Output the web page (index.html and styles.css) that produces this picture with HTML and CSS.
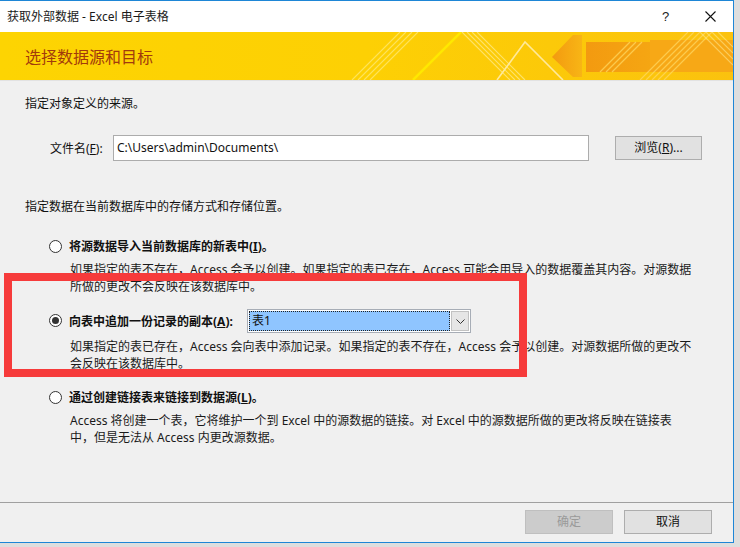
FILE: index.html
```html
<!DOCTYPE html>
<html lang="zh-CN">
<head>
<meta charset="utf-8">
<title>获取外部数据 - Excel 电子表格</title>
<link rel="stylesheet" href="styles.css">
</head>
<body>
<div class="window">
  <div class="titlebar">
    <span class="title">获取外部数据 - Excel 电子表格</span>
    <span class="help">?</span>
    <svg class="close" width="11" height="11" viewBox="0 0 11 11"><path d="M0.5 0.5L10.5 10.5M10.5 0.5L0.5 10.5" stroke="#111" stroke-width="1.1" fill="none"/></svg>
  </div>
  <div class="banner">
    <svg class="banner-art" width="733" height="48" viewBox="0 0 733 48">
      <defs>
        <linearGradient id="bg" x1="0" y1="0" x2="1" y2="0">
          <stop offset="0" stop-color="#fdd402"/>
          <stop offset="0.5" stop-color="#fdd004"/>
          <stop offset="1" stop-color="#fbc20e"/>
        </linearGradient>
        <linearGradient id="arrow" x1="0" y1="0" x2="1" y2="0">
          <stop offset="0" stop-color="#f39a10"/>
          <stop offset="1" stop-color="#f8b515"/>
        </linearGradient>
      </defs>
      <rect width="733" height="48" fill="url(#bg)"/>
      <g stroke="#fff3a0" stroke-opacity="0.55" stroke-width="1.2">
        <path d="M352 48L400 0M358 48L406 0M364 48L412 0M370 48L418 0"/>
      </g>
      <path d="M413 48L461 0" stroke="#ffe800" stroke-width="2.5"/>
      <g stroke="#fff1a8" stroke-opacity="0.6" stroke-width="1.2">
        <path d="M462 0L510 48M467 0L515 48M472 0L520 48M477 0L525 48"/>
      </g>
      <path d="M497 48L525 10L563 48" stroke="#ffe99a" stroke-width="1.6" fill="none"/>
      <polygon points="552,25 573,3 582,3 582,45 573,45" fill="url(#arrow)"/>
      <rect x="586" y="10" width="147" height="30" fill="url(#arrow)"/>
      <rect x="650" y="8" width="83" height="32" fill="#f7a816"/>
      <g stroke="#ffd760" stroke-opacity="0.75" stroke-width="1.3">
        <path d="M600 40L630 10M606 40L636 10M612 40L642 10"/>
        <path d="M640 48L688 0M646 48L694 0M652 48L700 0M658 48L706 0M664 48L712 0"/>
      </g>
      <g stroke="#fff0a0" stroke-opacity="0.5" stroke-width="1.2">
        <path d="M700 0L733 33M706 0L733 27M712 0L733 21M718 0L733 15"/>
      </g>
    </svg>
    <h1 class="banner-title">选择数据源和目标</h1>
  </div>
  <div class="main">
    <p class="note note-source">指定对象定义的来源。</p>
    <div class="file-row">
      <span class="file-label">文件名(<u>F</u>):</span>
      <div class="file-input">C:\Users\admin\Documents\</div>
      <button class="btn btn-browse">浏览(<u>R</u>)...</button>
    </div>
    <p class="note note-storage">指定数据在当前数据库中的存储方式和存储位置。</p>

    <div class="option opt-import">
      <div class="opt-head">
        <span class="radio"></span>
        <span class="opt-label">将源数据导入当前数据库的新表中(<u>I</u>)。</span>
      </div>
      <p class="opt-desc">如果指定的表不存在，Access 会予以创建。如果指定的表已存在，Access 可能会用导入的数据覆盖其内容。对源数据<br>所做的更改不会反映在该数据库中。</p>
    </div>

    <div class="option opt-append">
      <div class="opt-head opt-head-combo">
        <span class="radio radio-checked"></span>
        <span class="opt-label opt-label-fixed">向表中追加一份记录的副本(<u>A</u>):</span>
        <div class="combo">
          <span class="combo-value">表1</span>
          <span class="combo-btn">
            <svg width="9" height="5" viewBox="0 0 9 5"><path d="M0.5 0.5L4.5 4.5L8.5 0.5" stroke="#333" stroke-width="1" fill="none"/></svg>
          </span>
        </div>
      </div>
      <p class="opt-desc">如果指定的表已存在，Access 会向表中添加记录。如果指定的表不存在，Access 会予以创建。对源数据所做的更改不<br>会反映在该数据库中。</p>
    </div>

    <div class="option opt-link">
      <div class="opt-head">
        <span class="radio"></span>
        <span class="opt-label">通过创建链接表来链接到数据源(<u>L</u>)。</span>
      </div>
      <p class="opt-desc">Access 将创建一个表，它将维护一个到 Excel 中的源数据的链接。对 Excel 中的源数据所做的更改将反映在链接表<br>中，但是无法从 Access 内更改源数据。</p>
    </div>
  </div>
  <div class="footer">
    <button class="btn btn-ok" disabled>确定</button>
    <button class="btn btn-cancel">取消</button>
  </div>
  <div class="highlight"></div>
</div>
</body>
</html>
```

FILE: styles.css
```css
* { box-sizing: border-box; }

html, body {
  margin: 0;
  padding: 0;
}

body {
  width: 740px;
  height: 547px;
  overflow: hidden;
  background: #dedede;
  font-family: "Noto Sans", "Noto Sans CJK SC", sans-serif;
  font-size: 12px;
  color: #111;
}

.window {
  position: relative;
  width: 734px;
  height: 543px;
  border-top: 1px solid #1e86d6;
  border-right: 1px solid #1e86d6;
  border-bottom: 1px solid #1e86d6;
  background: #f0f0f0;
  display: flex;
  flex-direction: column;
}

.titlebar {
  height: 31px;
  flex: none;
  background: #fff;
  display: flex;
  align-items: center;
}

.title {
  padding-left: 7px;
  line-height: 16px;
  color: #1a1a1a;
  flex: 1;
}

.help {
  font-family: "Liberation Sans", sans-serif;
  font-size: 13px;
  color: #222;
  width: 43px;
}

.close {
  margin-right: 17px;
  display: block;
}

.banner {
  position: relative;
  height: 49px;
  flex: none;
  border-bottom: 1px solid #e2e2e2;
  overflow: hidden;
}

.banner-art {
  position: absolute;
  left: 0;
  top: 0;
  display: block;
}

.banner-title {
  position: relative;
  margin: 0;
  padding-left: 25px;
  height: 48px;
  line-height: 48px;
  font-size: 16px;
  font-weight: normal;
  font-family: "Noto Sans CJK SC", sans-serif;
  color: #a23a0c;
}

.main {
  flex: 1;
  display: flex;
  flex-direction: column;
}

.note {
  margin: 0;
  padding-left: 25px;
  line-height: 17px;
}

.note-source { margin-top: 14px; }

.file-row {
  margin-top: 23px;
  height: 26px;
  display: flex;
  align-items: center;
}

.file-label {
  margin-left: 50px;
  width: 63px;
  line-height: 17px;
}

.file-input {
  width: 476px;
  height: 26px;
  border: 1px solid #acacac;
  background: #fff;
  padding-left: 3px;
  line-height: 23px;
  white-space: nowrap;
}

.btn {
  font-family: "Noto Sans", "Noto Sans CJK SC", sans-serif;
  font-size: 12px;
  height: 24px;
  padding: 0;
  border: 1px solid #adadad;
  background: #e1e1e1;
  color: #111;
  line-height: 20px;
}

.btn-browse {
  margin-left: 26px;
  width: 87px;
}

.note-storage { margin-top: 37px; }

.option {
  display: flex;
  flex-direction: column;
}

.opt-import { margin-top: 21px; }
.opt-append { margin-top: 14px; }
.opt-link { margin-top: 15px; }

.opt-head {
  height: 20px;
  display: flex;
  align-items: center;
}

.opt-head-combo { height: 24px; }

.radio {
  position: relative;
  margin-left: 49px;
  width: 13px;
  height: 13px;
  border: 1px solid #333;
  border-radius: 50%;
  background: #fff;
  flex: none;
}

.opt-head-combo .radio { margin-top: -2px; }

.radio-checked::after {
  content: "";
  position: absolute;
  left: 2px;
  top: 2px;
  width: 7px;
  height: 7px;
  border-radius: 50%;
  background: #333;
}

.opt-label {
  margin-left: 7px;
  font-weight: 700;
  line-height: 17px;
  white-space: nowrap;
}

.opt-label-fixed { width: 178px; }

.combo {
  width: 224px;
  height: 24px;
  border: 1px solid #a7adb6;
  background: #fff;
  padding: 1px;
  display: flex;
}

.combo-value {
  flex: 1;
  background: #8fc5ff;
  border: 1px dotted #222;
  padding-left: 2px;
  line-height: 18px;
}

.combo-btn {
  width: 18px;
  margin-left: 1px;
  background: #e6e6e6;
  border: 1px solid #c2c2c2;
  display: flex;
  align-items: center;
  justify-content: center;
}

.combo-btn svg { display: block; }

.opt-desc {
  margin: 5px 0 0 70px;
  line-height: 17px;
  white-space: nowrap;
  color: #1a1a1a;
}

.footer {
  flex: none;
  height: 40px;
  border-top: 1px solid #a0a0a0;
  display: flex;
  justify-content: flex-end;
  align-items: flex-start;
  padding: 7px 21px 0 0;
  gap: 11px;
}

.btn-ok,
.btn-cancel {
  width: 88px;
}

.btn-ok {
  background: #cccccc;
  border-color: #bfbfbf;
  color: #9a9a9a;
}

.highlight {
  position: absolute;
  left: 4px;
  top: 272px;
  width: 523px;
  height: 104px;
  border: 8px solid #f63b3b;
}
```
